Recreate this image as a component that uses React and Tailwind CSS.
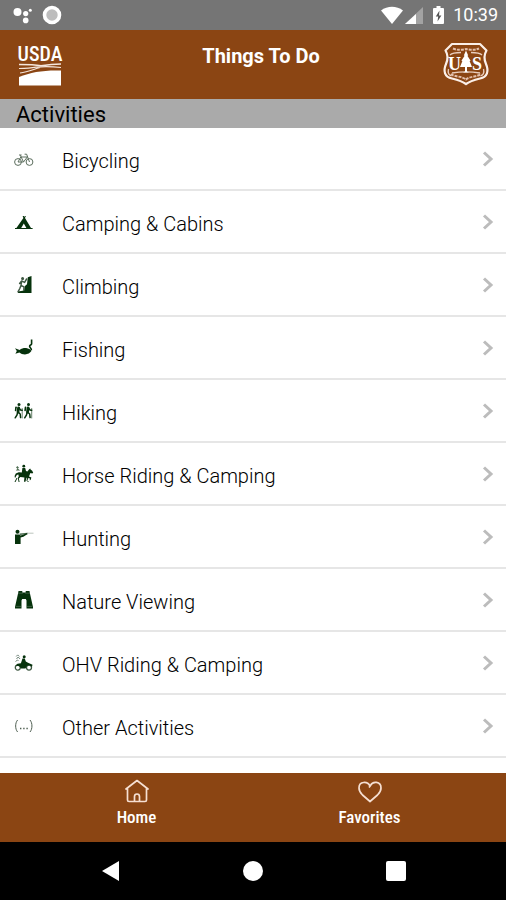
import React from 'react';

const GREEN = '#06320c';

function BicycleIcon() {
  return (
    <g fill="none" stroke="#5c6e5e" strokeWidth="1">
      <circle cx="4" cy="13" r="3.4" />
      <circle cx="15.5" cy="13" r="3.4" />
      <path d="M4 13L6.8 8h6.5L9.5 13H4M6.3 6.2L9.5 13M5 6h2.6M15.5 13L12.6 5.2h-2" />
    </g>
  );
}

function CampingIcon() {
  return (
    <g fill={GREEN}>
      <path d="M8.6 4h1.2l.5 1 .6-1h1l-.9 2 6 10h1.6v1H1v-1h1.4l7-10z" />
      <path d="M9.8 11.5L12.4 16H7.200z" fill="#fff" />
    </g>
  );
}

function ClimbingIcon() {
  return (
    <g>
      <path d="M17.500 1v17H4v-1.4l6-1 1-4.6 2-1.8.8-7z" fill={GREEN} />
      <g fill="none" stroke="#3f5943" strokeWidth="1.500" strokeLinecap="round">
        <circle cx="8.6" cy="3.6" r=".8" fill="#3f5943" />
        <path d="M7.6 6L7 10.5M7.6 6l3 1.4 2-3.4M7.6 6L5.6 8.4M7 10.5l3 1.4-.2 3.4M7 10.5l-1.2 3L4 16.8" />
      </g>
    </g>
  );
}

function FishingIcon() {
  return (
    <g>
      <path
        d="M1 10.2l4.600 1.700C8 10.200 10.500 9.800 13 10.200c2.200.4 3.800 1.500 4.400 2.800-1.200 2-3.600 3.300-6.400 3.400-2.400 0-4.200-.8-5.600-2L1.400 15.800l1.400-2.800z"
        fill={GREEN}
      />
      <path d="M17.600 1.500v4.200c0 1.600-2 1-2 2.600 0 1.400 2 1.600 1.800 4" fill="none" stroke={GREEN} strokeWidth="1.600" />
    </g>
  );
}

function Hiker({ x }) {
  return (
    <g transform={`translate(${x} 0)`} fill="none" stroke={GREEN} strokeLinecap="round">
      <circle cx="5" cy="3.600" r="1.500" fill={GREEN} stroke="none" />
      <path d="M4.600 6.800L4 11" strokeWidth="2.800" />
      <path d="M2 6.200L1.600 9.500" strokeWidth="1.600" />
      <path d="M5 7l1.600 2 1.600.2M4 11l2.200 2 .4 3.600M3.600 11.500L3 14l-1.800 2.800" strokeWidth="1.500" />
      <path d="M8.200 7.500V17" strokeWidth=".6" />
    </g>
  );
}

function HikingIcon() {
  return (
    <g>
      <Hiker x={0} />
      <Hiker x={9.5} />
    </g>
  );
}

function HorseIcon() {
  return (
    <g fill={GREEN}>
      <circle cx="9.800" cy="2.200" r="1.400" />
      <path d="M8.400 4h2.800l.8 3 1.400.6 1.800-2.400 1-.8.400 1 1.600 1.400 1 2-1 .8-1.800-.6-1.400 3.400 2.400 1.200-.8 2.400-1 .2.400-1.800-3.400-.6-1.200 4h-1.400l.4-4.200-4-.6-1.600 1.600.8 3.400H4.600L3.800 14l1-1.800-.6-2L2.400 11.400 1 14.200.6 12l1.200-2.600 3-1.200 3 .2z" />
      <path d="M2 3.500l1.400-1.400L5 3.800l-1.200.6 2.400 2H1.800l1.600-1.600z" opacity=".7" />
      <path d="M3 14l-2 4M14 13l-1 3.500 1.500 1.500" stroke={GREEN} fill="none" />
    </g>
  );
}

function HuntingIcon() {
  return (
    <g fill={GREEN}>
      <circle cx="3.500" cy="4.800" r="2" />
      <path d="M1 7.500h4.500l1 1 2.500-.8 4-1.800.6 1.100-4.200 2.800-2.800.6V17H1z" />
      <path d="M5.500 6.500l8-.8v1.600l-7.500.8z" opacity=".7" />
      <path d="M13 6.200h6.500" stroke="#a9b5ab" strokeWidth=".8" />
    </g>
  );
}

function BinocularsIcon() {
  return (
    <g fill={GREEN}>
      <path d="M4.500 1h3.800v1.600h3.400V1h3.800l.4 2.200L19 17v1.500h-6.500v-8L11.800 9H8.200l-.7 1.500v8H1V17L4.100 3.200z" />
      <path d="M4 3.200h5M11 3.200h5M1.800 16.400h5.400M12.800 16.400h5.400" stroke="#6a846e" strokeWidth=".5" />
    </g>
  );
}

function OhvIcon() {
  return (
    <g>
      <g fill="none" stroke="#3f5943" strokeWidth="1.300">
        <circle cx="3.800" cy="14.600" r="2.500" />
        <circle cx="15" cy="14.600" r="2.500" />
      </g>
      <path d="M8.500 5.500h2.300l1 3 2.200 1.300 4.500 2-.5 2-2.500-1.600-2.500.6-1.500 2.800H7l-1.600-2.400L1.500 12.500l2-1.700 3.400-.6z" fill={GREEN} />
      <circle cx="10.200" cy="3.800" r="1.500" fill={GREEN} />
      <path d="M2.200 3.500l1.500-1.600 1.600 1.600M2.500 6l1.600-2 2 2M1.500 8.500l2-1.500 1 1" fill="none" stroke="#72857a" />
    </g>
  );
}

function OtherIcon() {
  return (
    <g fill="none" stroke="#4f5f52">
      <path d="M3.600 4C1 7 1 13 3.600 16M16 4c2.600 3 2.600 9 0 12" />
      <path d="M6 12.500h1.400M9.200 12.500h1.400M12.400 12.500h1.400" strokeWidth="1.400" />
    </g>
  );
}

const activities = [
  { name: 'Bicycling', Icon: BicycleIcon },
  { name: 'Camping & Cabins', Icon: CampingIcon },
  { name: 'Climbing', Icon: ClimbingIcon },
  { name: 'Fishing', Icon: FishingIcon },
  { name: 'Hiking', Icon: HikingIcon },
  { name: 'Horse Riding & Camping', Icon: HorseIcon },
  { name: 'Hunting', Icon: HuntingIcon },
  { name: 'Nature Viewing', Icon: BinocularsIcon },
  { name: 'OHV Riding & Camping', Icon: OhvIcon },
  { name: 'Other Activities', Icon: OtherIcon },
];

function StatusBar() {
  return (
    <div className="flex h-[30px] items-center justify-between bg-[#757575] pl-3 pr-2 text-white">
      <div className="flex items-center gap-1">
        <svg className="h-5 w-6" viewBox="0 0 24 20" fill="#fff">
          <circle cx="5.500" cy="7" r="4" />
          <circle cx="13.700" cy="8.600" r="2.600" />
          <circle cx="13.700" cy="15.400" r="2.800" />
          <circle cx="18.300" cy="5.200" r="1.500" />
        </svg>
        <svg className="h-5 w-6" viewBox="0 0 24 20">
          <circle cx="12" cy="10" r="7.500" fill="#bdbdbd" stroke="#fff" strokeWidth="3.600" />
        </svg>
      </div>
      <div className="flex items-center">
        <svg className="h-5 w-[52px]" viewBox="0 0 52 20">
          <path d="M0 5.500C6.500.6 15.500.6 22 5.500L11 19z" fill="#fff" />
          <path d="M42 2v17H24z" fill="#a3a3a3" />
          <path d="M35 9v10H24z" fill="#fff" />
        </svg>
        <svg className="mr-2 h-5 w-3" viewBox="0 0 12 20">
          <path d="M3.500 1h4v2H10a1 1 0 011 1v14a1 1 0 01-1 1H1a1 1 0 01-1-1V4a1 1 0 011-1h2.500z" fill="#fff" />
          <path d="M6.500 5.500L2.800 11.500h2.400L4.500 16.500l3.900-6H6z" fill="#555" />
        </svg>
        <span className="text-lg">10:39</span>
      </div>
    </div>
  );
}

function UsdaLogo() {
  return (
    <div className="w-16">
      <svg className="h-12 w-12" viewBox="0 0 48 48" role="img" aria-label="USDA">
        <text x="24" y="20" textAnchor="middle" fill="#fff" fontFamily="Roboto Condensed, Roboto, sans-serif" fontSize="20" fontWeight="500">
          USDA
        </text>
        <path d="M3 23.500c8 0 16 .2 22 1.300C31 23.800 38 23 45 23" fill="none" stroke="#f5e6dc" strokeWidth="1.400" />
        <path d="M3 27.500c7 0 12-.3 17-1.400C28 25.400 36 25.500 45 26.500M4 32c8-1 13-3.500 20-5.500" fill="none" stroke="#f5e6dc" strokeWidth="1.200" />
        <path d="M3 36C15 31 28 29 45 29.500V44.500H3z" fill="#fff" />
      </svg>
    </div>
  );
}

function ForestServiceShield() {
  return (
    <svg className="h-12 w-12" viewBox="0 0 48 48" role="img" aria-label="Forest Service">
      <path
        d="M10 3h28l6.500 6.500c-3 5-2.500 9-.5 13.500 3 7 1.500 13-6 14.500-6 1.500-10 2.500-14 5.500-4-3-8-4-14-5.500-7.500-1.500-9-7.500-6-14.500 2-4.500 2.500-8.500-.5-13.500z"
        fill="none" stroke="#fbefe8" strokeWidth="2.200" strokeLinejoin="round"
      />
      <path
        d="M11 7.500c5 2 9 1.500 13 .5 4 1 8 1.500 13-.5M9 33c3 3 11 2 15 5.500 4-3.500 12-2.500 15-5.500"
        fill="none" stroke="#e3c0ad" strokeWidth="2" strokeDasharray="3 1"
      />
      <path d="M8 14c2-2 5-2.500 11-2.500M29 11.500c6 0 9 .5 11 2.500M6.500 28c-1 4 0 6 3 7M41.500 28c1 4 0 6-3 7M10 32c9-1.500 19-1.500 28 0" fill="none" stroke="#e9cdbd" strokeWidth="1.300" />
      <path d="M24 9.500l2.200 5-.8.300 3.200 5-1 .3 2.400 6H25v4.500l2 1h-6l2-1v-4.500h-5l2.400-6-1-.3 3.200-5-.8-.3z" fill="#fff" />
      <g fill="#fff" fontFamily="Liberation Serif, serif" fontSize="18" fontWeight="700" textAnchor="middle">
        <text x="12.500" y="29">U</text>
        <text x="35" y="29">S</text>
      </g>
    </svg>
  );
}

function Header() {
  return (
    <header className="flex h-[69px] items-center justify-between bg-[#8b4513] px-4 text-white">
      <UsdaLogo />
      <h1 className="self-start pt-3 text-xl font-bold">Things To Do</h1>
      <ForestServiceShield />
    </header>
  );
}

function ActivityRow({ name, Icon }) {
  return (
    <li className="border-b-2 border-[#e6e6e6]">
      <a href="#activity" className="flex h-[61px] items-center pl-[14px] pr-3">
        <svg className="mr-7 h-5 w-5" viewBox="0 0 20 20" aria-hidden="true">
          <Icon />
        </svg>
        <span className="flex-1 pt-1 text-xl font-light">{name}</span>
        <svg className="h-4 w-3" viewBox="0 0 12 16" fill="none" stroke="#bcbcbc" strokeWidth="3">
          <path d="M2 1.500L9 8l-7 6.500" />
        </svg>
      </a>
    </li>
  );
}

function TabBar() {
  return (
    <nav className="flex h-[69px] justify-around bg-[#8b4513] px-5 pt-[6px] font-['Roboto_Condensed','Roboto',sans-serif] font-medium text-white">
      <a href="#home" className="flex flex-1 flex-col items-center">
        <svg className="h-6 w-6" viewBox="0 0 24 24" fill="none" stroke="#f6dfd2" strokeWidth="1.700" strokeLinejoin="round" strokeLinecap="round">
          <path d="M1 10L12 1.500l11 8.500M2.500 9V21a1.500 1.500 0 001.500 1.500h16a1.500 1.500 0 001.500-1.500V9M9.500 22v-4.500a2.500 2.500 0 015 0V22" />
        </svg>
        <span className="text-[17px] leading-[28px]">Home</span>
      </a>
      <a href="#favorites" className="flex flex-1 flex-col items-center">
        <svg className="h-6 w-6" viewBox="0 0 24 24" fill="none" stroke="#f6dfd2" strokeWidth="1.700" strokeLinejoin="round">
          <path d="M11 8.500l1.500-2C14.500 2 23 2 23 9c0 3-1.500 5-3.500 7L12 22.500 4.500 16C2.500 14 1 12 1 9c0-7 8.500-7 11-2" />
        </svg>
        <span className="text-[17px] leading-[28px]">Favorites</span>
      </a>
    </nav>
  );
}

function SystemNav() {
  return (
    <div className="flex h-[58px] items-center justify-between bg-black px-[100px]">
      <button aria-label="Back">
        <svg className="h-5 w-5" viewBox="0 0 20 20" fill="#fff">
          <path d="M19 0v20L2 10z" />
        </svg>
      </button>
      <button aria-label="Home screen" className="h-5 w-5 rounded-full bg-white" />
      <button aria-label="Recent apps" className="h-5 w-5 rounded-xs bg-white" />
    </div>
  );
}

function App() {
  return (
    <div className="flex min-h-screen flex-col bg-white font-['Roboto',sans-serif] text-black">
      <StatusBar />
      <Header />
      <main className="flex-1">
        <h2 className="h-[29px] bg-[#aaaaaa] px-4 text-[22px] leading-[32px]">Activities</h2>
        <ul>
          {activities.map((activity) => (
            <ActivityRow key={activity.name} {...activity} />
          ))}
        </ul>
      </main>
      <TabBar />
      <SystemNav />
    </div>
  );
}

export default App;
